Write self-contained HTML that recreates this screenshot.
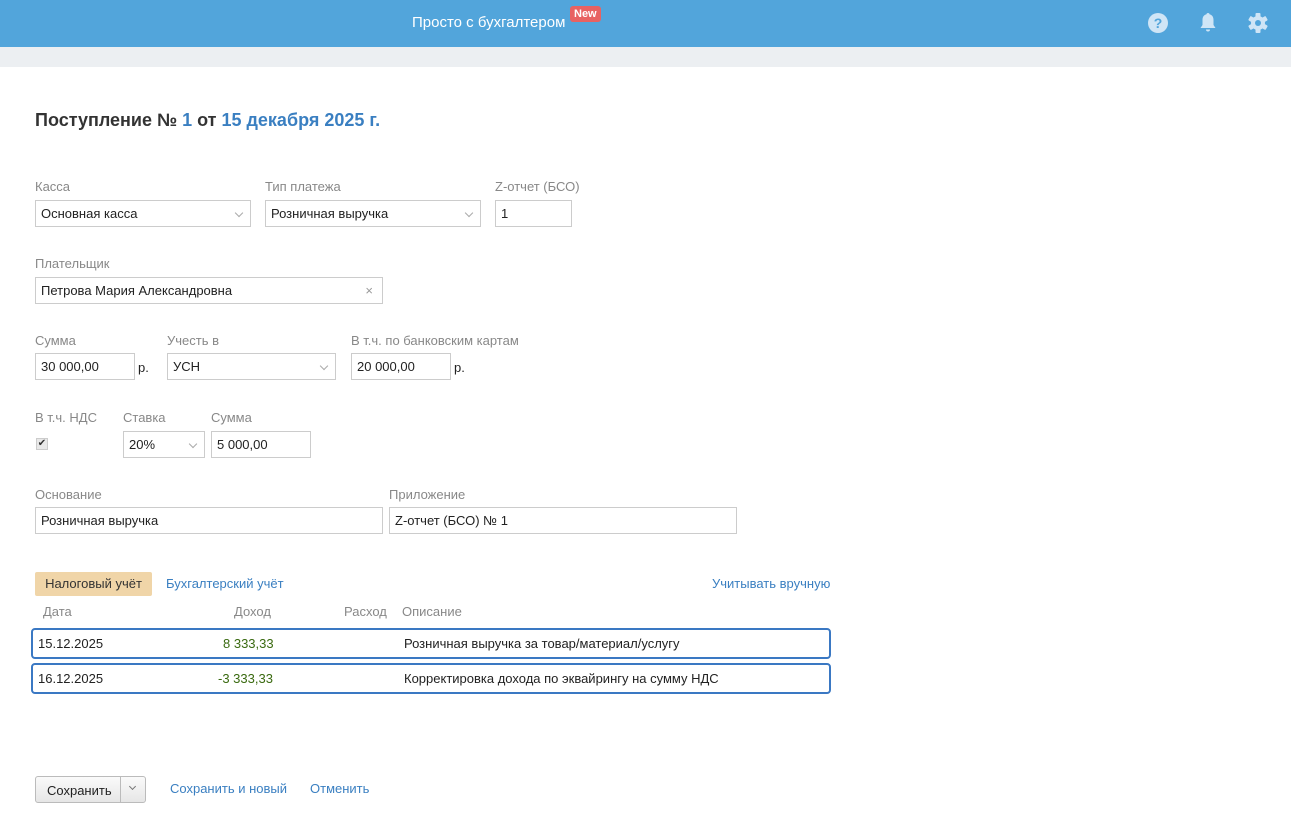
<!DOCTYPE html>
<html><head><meta charset="utf-8"><style>
*{box-sizing:border-box;margin:0;padding:0}
body{width:1291px;height:818px;background:#fff;font-family:"Liberation Sans",Arial,sans-serif;font-size:13px;color:#222;position:relative;overflow:hidden}
.a{position:absolute}
.hdr{left:0;top:0;width:1291px;height:47px;background:#52a5db}
.band{left:0;top:47px;width:1291px;height:20px;background:#eceff2}
.lbl{color:#888;font-size:13px}
.in{border:1px solid #ccc;background:#fff;height:27px;padding:0 5px;line-height:25px;font-size:13px;color:#222}
.chev{position:absolute;right:8px;top:9px;width:6px;height:6px;border-right:1px solid #aaa;border-bottom:1px solid #aaa;transform:rotate(45deg)}
.lnk{color:#3a7fc1}
.row{left:31px;width:800px;border:2.5px solid #3a78c3;border-radius:4px;height:31px}
.row span{position:absolute;top:6px}
</style></head><body>
<div class="a hdr"></div>
<div class="a band"></div>
<div class="a" style="left:412px;top:14px;color:#fff;font-size:15px">Просто с бухгалтером</div>
<div class="a" style="left:570px;top:6px;background:#e86262;color:#fff;font-size:11px;font-weight:bold;padding:2px 4px;border-radius:3px">New</div>
<svg class="a" style="left:1147px;top:12px" width="22" height="22" viewBox="0 0 22 22"><circle cx="11" cy="11" r="10" fill="#cfe5f6"/><text x="11" y="16" text-anchor="middle" font-size="14" font-weight="bold" fill="#52a5db" font-family="Liberation Sans">?</text></svg>
<svg class="a" style="left:1198px;top:11px" width="20" height="22" viewBox="0 0 20 22"><path d="M10 2c-1 0-1.5.6-1.5 1.3C5.5 4 4.5 6.5 4.5 9v5L2.5 17h15l-2-3V9c0-2.5-1-5-4-5.7C11.5 2.6 11 2 10 2z" fill="#cfe5f6"/><path d="M8 18.5a2 2 0 0 0 4 0z" fill="#cfe5f6"/></svg>
<svg class="a" style="left:1247px;top:12px" width="22" height="22" viewBox="0 0 22 22"><g fill="#cfe5f6"><circle cx="11" cy="11" r="7"/><g id="t"><rect x="8.5" y="1" width="5" height="5" rx="1"/></g><use href="#t" transform="rotate(60 11 11)"/><use href="#t" transform="rotate(120 11 11)"/><use href="#t" transform="rotate(180 11 11)"/><use href="#t" transform="rotate(240 11 11)"/><use href="#t" transform="rotate(300 11 11)"/></g><circle cx="11" cy="11" r="3" fill="#52a5db"/></svg>

<div class="a" style="left:35px;top:110px;font-size:18px;font-weight:bold;color:#333">Поступление № <span class="lnk">1</span> от <span class="lnk">15 декабря 2025 г.</span></div>

<div class="a lbl" style="left:35px;top:179px">Касса</div>
<div class="a lbl" style="left:265px;top:179px">Тип платежа</div>
<div class="a lbl" style="left:495px;top:179px">Z-отчет (БСО)</div>
<div class="a in" style="left:35px;top:200px;width:216px">Основная касса<i class="chev"></i></div>
<div class="a in" style="left:265px;top:200px;width:216px">Розничная выручка<i class="chev"></i></div>
<div class="a in" style="left:495px;top:200px;width:77px">1</div>

<div class="a lbl" style="left:35px;top:256px">Плательщик</div>
<div class="a in" style="left:35px;top:277px;width:348px">Петрова Мария Александровна<span style="position:absolute;right:9px;top:0;color:#999">×</span></div>

<div class="a lbl" style="left:35px;top:333px">Сумма</div>
<div class="a lbl" style="left:167px;top:333px">Учесть в</div>
<div class="a lbl" style="left:351px;top:333px">В т.ч. по банковским картам</div>
<div class="a in" style="left:35px;top:353px;width:100px">30 000,00</div>
<div class="a" style="left:138px;top:360px">р.</div>
<div class="a in" style="left:167px;top:353px;width:169px">УСН<i class="chev"></i></div>
<div class="a in" style="left:351px;top:353px;width:100px">20 000,00</div>
<div class="a" style="left:454px;top:360px">р.</div>

<div class="a lbl" style="left:35px;top:410px">В т.ч. НДС</div>
<div class="a lbl" style="left:123px;top:410px">Ставка</div>
<div class="a lbl" style="left:211px;top:410px">Сумма</div>
<div class="a" style="left:36px;top:438px;width:12px;height:12px;background:#e8e8e8;border:1px solid #ccc;font-size:10px;line-height:10px;text-align:center;color:#333">✔</div>
<div class="a in" style="left:123px;top:431px;width:82px">20%<i class="chev"></i></div>
<div class="a in" style="left:211px;top:431px;width:100px">5 000,00</div>

<div class="a lbl" style="left:35px;top:487px">Основание</div>
<div class="a lbl" style="left:389px;top:487px">Приложение</div>
<div class="a in" style="left:35px;top:507px;width:348px">Розничная выручка</div>
<div class="a in" style="left:389px;top:507px;width:348px">Z-отчет (БСО) № 1</div>

<div class="a" style="left:35px;top:572px;width:117px;height:24px;background:#f0d5a8;border-radius:2px;line-height:24px;text-align:center;color:#333">Налоговый учёт</div>
<div class="a lnk" style="left:166px;top:576px">Бухгалтерский учёт</div>
<div class="a lnk" style="left:712px;top:576px">Учитывать вручную</div>
<div class="a lbl" style="left:43px;top:604px">Дата</div>
<div class="a lbl" style="left:234px;top:604px">Доход</div>
<div class="a lbl" style="left:344px;top:604px">Расход</div>
<div class="a lbl" style="left:402px;top:604px">Описание</div>
<div class="a row" style="top:628px"><span style="left:5px">15.12.2025</span><span style="left:190px;color:#3a6a10">8 333,33</span><span style="left:371px">Розничная выручка за товар/материал/услугу</span></div>
<div class="a row" style="top:663px"><span style="left:5px">16.12.2025</span><span style="left:185px;color:#3a6a10">-3 333,33</span><span style="left:371px">Корректировка дохода по эквайрингу на сумму НДС</span></div>

<div class="a" style="left:35px;top:776px;width:111px;height:27px;border:1px solid #bbb;border-radius:3px;background:linear-gradient(#fafafa,#e6e6e6)"><span style="position:absolute;left:11px;top:6px">Сохранить</span><span style="position:absolute;left:84px;top:0;width:1px;height:25px;background:#bbb"></span><i class="chev" style="right:10px;top:7px;width:5px;height:5px;border-color:#777"></i></div>
<div class="a lnk" style="left:170px;top:781px">Сохранить и новый</div>
<div class="a lnk" style="left:310px;top:781px">Отменить</div>
</body></html>
